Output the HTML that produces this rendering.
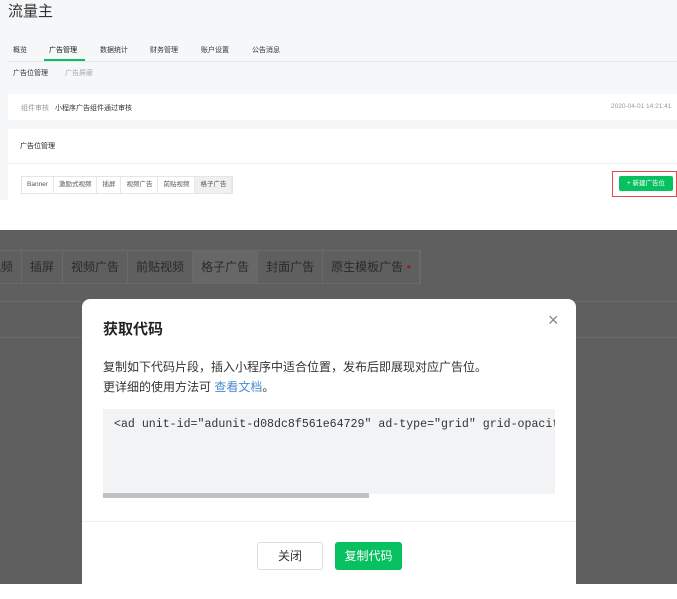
<!DOCTYPE html>
<html><head><meta charset="utf-8"><style>
*{margin:0;padding:0;box-sizing:border-box}
body{width:677px;height:584px;overflow:hidden;position:relative;background:#fff;font-family:"Liberation Sans","Noto Sans CJK SC",sans-serif}
.a{position:absolute;white-space:nowrap}
.top{position:absolute;left:0;top:0;width:677px;height:200px;background:#f6f7f9}
.dark{position:absolute;left:0;top:230px;width:677px;height:354px;background:#5f5f5f}
.t{font-size:7px;color:#333}
.tabs{position:absolute;top:176px;left:21px;display:flex;border:1px solid #e5e5e5;background:#fff}
.tabs div{font-size:6.5px;color:#555;padding:0 5px;height:16px;line-height:15px;border-right:1px solid #e8e8e8}
.dt{position:absolute;top:250px;left:-20px;display:flex;border:1px solid #6a6a6a}
.dt div{font-size:12px;color:#2a2a2a;height:32px;line-height:32px;border-right:1px solid #6a6a6a;padding:0 8px}
</style></head><body>
<div class="top"></div>
<div class="a" style="left:8px;top:0;font-size:15px;color:#333">流量主</div>
<div class="a t" style="left:13px;top:45px">概览</div>
<div class="a t" style="left:49px;top:45px;color:#111">广告管理</div>
<div style="position:absolute;left:44px;top:59px;width:41px;height:2px;background:#07c160"></div>
<div class="a t" style="left:100px;top:45px">数据统计</div>
<div class="a t" style="left:150px;top:45px">财务管理</div>
<div class="a t" style="left:201px;top:45px">账户设置</div>
<div class="a t" style="left:252px;top:45px">公告消息</div>
<div style="position:absolute;left:8px;top:61px;width:669px;height:1px;background:#e6e6e6"></div>
<div class="a t" style="left:13px;top:68px">广告位管理</div>
<div class="a t" style="left:65px;top:68px;color:#aaa">广告屏蔽</div>
<div style="position:absolute;left:8px;top:94px;width:669px;height:26px;background:#fff"></div>
<div class="a t" style="left:21px;top:103px;color:#999">组件审核</div>
<div class="a t" style="left:55px;top:103px">小程序广告组件通过审核</div>
<div class="a" style="left:611px;top:103px;font-size:6.5px;color:#999">2020-04-01 14:21:41</div>
<div style="position:absolute;left:8px;top:129px;width:669px;height:71px;background:#fff"></div>
<div class="a t" style="left:20px;top:141px;color:#222">广告位管理</div>
<div style="position:absolute;left:8px;top:163px;width:669px;height:1px;background:#eee"></div>
<div class="tabs"><div>Banner</div><div>激励式视频</div><div>插屏</div><div>视频广告</div><div>前贴视频</div><div style="background:#f0f0f0">格子广告</div></div>
<div style="position:absolute;left:612px;top:171px;width:65px;height:26px;border:1.5px solid #e04a4a"></div>
<div class="a" style="left:619px;top:176px;width:54px;height:15px;background:#07c160;border-radius:2px;color:#fff;font-size:6.5px;line-height:15px;text-align:center">+ 新建广告位</div>
<div class="dark"></div>
<div class="dt"><div>视频</div><div>插屏</div><div>视频广告</div><div>前贴视频</div><div style="background:#676767">格子广告</div><div>封面广告</div><div>原生模板广告 <span style="color:#9a2020;font-size:8px;vertical-align:top">●</span></div></div>
<div style="position:absolute;left:0;top:301px;width:677px;height:1px;background:#6a6a6a"></div>
<div style="position:absolute;left:0;top:337px;width:677px;height:1px;background:#6a6a6a"></div>
<div style="position:absolute;left:82px;top:299px;width:494px;height:300px;background:#fff;border-radius:8px"></div>
<div class="a" style="left:103px;top:318px;font-size:15px;color:#222;font-weight:bold">获取代码</div>
<div class="a" style="left:548px;top:310px;font-size:18px;color:#888">×</div>
<div class="a" style="left:103px;top:358px;font-size:12px;color:#333">复制如下代码片段，插入小程序中适合位置，发布后即展现对应广告位。</div>
<div class="a" style="left:103px;top:378px;font-size:12px;color:#333">更详细的使用方法可 <span style="color:#4a8bd0">查看文档</span>。</div>
<div style="position:absolute;left:103px;top:409px;width:452px;height:85px;background:#f2f3f5;overflow:hidden">
<div class="a" style="left:11px;top:9px;font-family:'Liberation Mono','DejaVu Sans Mono',monospace;font-size:11.6px;color:#333">&lt;ad unit-id="adunit-d08dc8f561e64729" ad-type="grid" grid-opacity</div></div>
<div style="position:absolute;left:103px;top:493px;width:266px;height:5px;background:#c1c1c1"></div>
<div style="position:absolute;left:82px;top:521px;width:494px;height:1px;background:#eee"></div>
<div class="a" style="left:257px;top:542px;width:66px;height:28px;border:1px solid #ddd;border-radius:3px;font-size:12px;line-height:26px;text-align:center;color:#333">关闭</div>
<div class="a" style="left:335px;top:542px;width:67px;height:28px;background:#07c160;border-radius:3px;font-size:12px;line-height:28px;text-align:center;color:#fff">复制代码</div>
</body></html>
